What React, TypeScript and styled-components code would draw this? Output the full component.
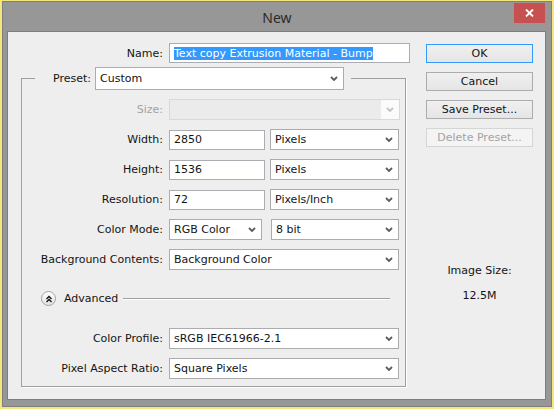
import React from "react";
import styled, { createGlobalStyle } from "styled-components";

const GlobalStyle = createGlobalStyle`
  html, body {
    margin: 0;
    padding: 0;
  }
  body {
    width: 554px;
    height: 409px;
    overflow: hidden;
    background: #f4e57d;
    font-family: "DejaVu Sans", "Liberation Sans", sans-serif;
    font-size: 11px;
    color: #141414;
  }
`;

const Window = styled.div`
  box-sizing: border-box;
  width: 550px;
  height: 406px;
  margin: 1px 0 0 2px;
  background: #979797;
  border: 1px solid #7f7f7f;
  display: flex;
  flex-direction: column;
`;

const TitleBar = styled.div`
  height: 29px;
  display: grid;
  grid-template-columns: 1fr auto 1fr;
`;

const Title = styled.div`
  grid-column: 2;
  align-self: center;
  font-family: "Noto Sans", "Open Sans", sans-serif;
  font-size: 14px;
  color: #2b2b2b;
  padding-top: 2px;
`;

const CloseButton = styled.div`
  grid-column: 3;
  justify-self: end;
  align-self: start;
  width: 31px;
  height: 20px;
  margin: 1px 6px 0 0;
  background: #c75050;
  display: flex;
  align-items: center;
  justify-content: center;
`;

const Pane = styled.div`
  flex: 1;
  margin: 0 5px 6px 4px;
  border: 1px solid #7d7d7d;
  background: #eeeeee;
  display: flex;
  padding: 11px 12px 0 13px;
`;

const Main = styled.div`
  width: 386px;
  display: flex;
  flex-direction: column;
`;

const NameRow = styled.div`
  display: grid;
  grid-template-columns: 142px 241px;
  column-gap: 6px;
  align-items: center;
`;

const Label = styled.span<{ $disabled?: boolean }>`
  text-align: right;
  white-space: nowrap;
  color: ${(p) => (p.$disabled ? "#a3a3a3" : "#141414")};
`;

const TextField = styled.div<{ $w?: number }>`
  box-sizing: border-box;
  width: ${(p) => (p.$w ? `${p.$w}px` : "100%")};
  height: 20px;
  border: 1px solid #abadb3;
  background: #fff;
  padding: 0 4px;
  display: flex;
  align-items: center;
  white-space: nowrap;
  overflow: hidden;
`;

const Selected = styled.span`
  background: #3399ff;
  color: #fff;
  line-height: 13px;
`;

const Group = styled.fieldset`
  box-sizing: border-box;
  width: 385px;
  min-width: 0;
  margin: 4px 0 0;
  padding: 9px 6px 7px 13px;
  border: 1px solid #a0a0a0;
  box-shadow: 1px 1px 0 #fff;
`;

const Legend = styled.legend`
  display: flex;
  align-items: center;
  gap: 4px;
  padding: 0 7px 0 18px;
`;

const Rows = styled.div`
  display: flex;
  flex-direction: column;
  gap: 9px;
`;

const Row = styled.div`
  display: grid;
  grid-template-columns: 128px auto;
  column-gap: 6px;
  align-items: center;
  height: 21px;
`;

const Controls = styled.div<{ $gap?: number }>`
  display: flex;
  align-items: center;
  gap: ${(p) => p.$gap ?? 5}px;
`;

const SelectBox = styled.div<{ $w: number; $h?: number; $disabled?: boolean }>`
  box-sizing: border-box;
  width: ${(p) => p.$w}px;
  height: ${(p) => p.$h ?? 21}px;
  border: 1px solid ${(p) => (p.$disabled ? "#d9d9d9" : "#acacac")};
  background: ${(p) => (p.$disabled ? "#ebebeb" : "#fff")};
  display: flex;
  align-items: center;
  white-space: nowrap;
`;

const SelectText = styled.span`
  flex: 1;
  padding-left: 4px;
  overflow: hidden;
`;

const ArrowCell = styled.span<{ $disabled?: boolean }>`
  width: 18px;
  align-self: stretch;
  display: flex;
  align-items: center;
  justify-content: center;
  background: ${(p) => (p.$disabled ? "#fbfbfb" : "transparent")};
`;

const AdvancedRow = styled.div`
  display: flex;
  align-items: center;
  height: 15px;
  margin: 21px 0 22px 6px;
`;

const ToggleIcon = styled.span`
  box-sizing: border-box;
  width: 15px;
  height: 15px;
  border-radius: 50%;
  border: 1px solid #a2a2a2;
  background: linear-gradient(#ffffff, #e2e2e2);
  display: flex;
  align-items: center;
  justify-content: center;
`;

const AdvancedText = styled.span`
  margin-left: 8px;
`;

const Rule = styled.span`
  flex: 1;
  margin: 0 9px 0 5px;
  border-top: 1px solid #a0a0a0;
  border-bottom: 1px solid #fff;
`;

const Side = styled.div`
  width: 107px;
  margin-left: auto;
  padding-top: 1px;
  display: flex;
  flex-direction: column;
  gap: 9px;
`;

const Button = styled.div<{ $default?: boolean; $disabled?: boolean }>`
  box-sizing: border-box;
  height: 19px;
  display: flex;
  align-items: center;
  justify-content: center;
  border: 1px solid
    ${(p) => (p.$default ? "#3399ff" : p.$disabled ? "#d5d5d5" : "#acacac")};
  background: ${(p) =>
    p.$disabled ? "#f4f4f4" : "linear-gradient(#f0f0f0, #e5e5e5)"};
  color: ${(p) => (p.$disabled ? "#a3a3a3" : "#141414")};
`;

const ImageInfo = styled.div`
  margin-top: 108px;
  text-align: center;
  line-height: 14px;
  display: flex;
  flex-direction: column;
  gap: 11px;
`;

const Chevron = ({ disabled }: { disabled?: boolean }) => (
  <svg width="8" height="6" viewBox="0 0 8 6">
    <polyline
      points="1,1 4,4 7,1"
      fill="none"
      stroke={disabled ? "#c4c4c4" : "#5c5c5c"}
      strokeWidth="1.8"
    />
  </svg>
);

const Select = ({
  value,
  w,
  h,
  disabled,
}: {
  value?: string;
  w: number;
  h?: number;
  disabled?: boolean;
}) => (
  <SelectBox $w={w} $h={h} $disabled={disabled}>
    <SelectText>{value}</SelectText>
    <ArrowCell $disabled={disabled}>
      <Chevron disabled={disabled} />
    </ArrowCell>
  </SelectBox>
);

export default function App() {
  return (
    <>
      <GlobalStyle />
      <Window>
        <TitleBar>
          <Title>New</Title>
          <CloseButton>
            <svg width="9" height="8" viewBox="0 0 9 8">
              <path d="M1 0.5 L8 7.5 M8 0.5 L1 7.5" stroke="#fff" strokeWidth="1.8" />
            </svg>
          </CloseButton>
        </TitleBar>
        <Pane>
          <Main>
            <NameRow>
              <Label>Name:</Label>
              <TextField>
                <Selected>Text copy Extrusion Material - Bump</Selected>
              </TextField>
            </NameRow>
            <Group>
              <Legend>
                <Label>Preset:</Label>
                <Select value="Custom" w={249} h={23} />
              </Legend>
              <Rows>
                <Row>
                  <Label $disabled>Size:</Label>
                  <Select w={231} disabled />
                </Row>
                <Row>
                  <Label>Width:</Label>
                  <Controls>
                    <TextField $w={96}>2850</TextField>
                    <Select value="Pixels" w={129} />
                  </Controls>
                </Row>
                <Row>
                  <Label>Height:</Label>
                  <Controls>
                    <TextField $w={96}>1536</TextField>
                    <Select value="Pixels" w={129} />
                  </Controls>
                </Row>
                <Row>
                  <Label>Resolution:</Label>
                  <Controls>
                    <TextField $w={96}>72</TextField>
                    <Select value="Pixels/Inch" w={129} />
                  </Controls>
                </Row>
                <Row>
                  <Label>Color Mode:</Label>
                  <Controls $gap={9}>
                    <Select value="RGB Color" w={93} />
                    <Select value="8 bit" w={128} />
                  </Controls>
                </Row>
                <Row>
                  <Label>Background Contents:</Label>
                  <Select value="Background Color" w={230} />
                </Row>
              </Rows>
              <AdvancedRow>
                <ToggleIcon>
                  <svg width="8" height="8" viewBox="0 0 8 8">
                    <path
                      d="M1.5 4 L4 1.5 L6.5 4 M1.5 7 L4 4.5 L6.5 7"
                      fill="none"
                      stroke="#111"
                      strokeWidth="1.3"
                    />
                  </svg>
                </ToggleIcon>
                <AdvancedText>Advanced</AdvancedText>
                <Rule />
              </AdvancedRow>
              <Rows>
                <Row>
                  <Label>Color Profile:</Label>
                  <Select value="sRGB IEC61966-2.1" w={230} />
                </Row>
                <Row>
                  <Label>Pixel Aspect Ratio:</Label>
                  <Select value="Square Pixels" w={230} />
                </Row>
              </Rows>
            </Group>
          </Main>
          <Side>
            <Button $default>OK</Button>
            <Button>Cancel</Button>
            <Button>Save Preset...</Button>
            <Button $disabled>Delete Preset...</Button>
            <ImageInfo>
              <span>Image Size:</span>
              <span>12.5M</span>
            </ImageInfo>
          </Side>
        </Pane>
      </Window>
    </>
  );
}
